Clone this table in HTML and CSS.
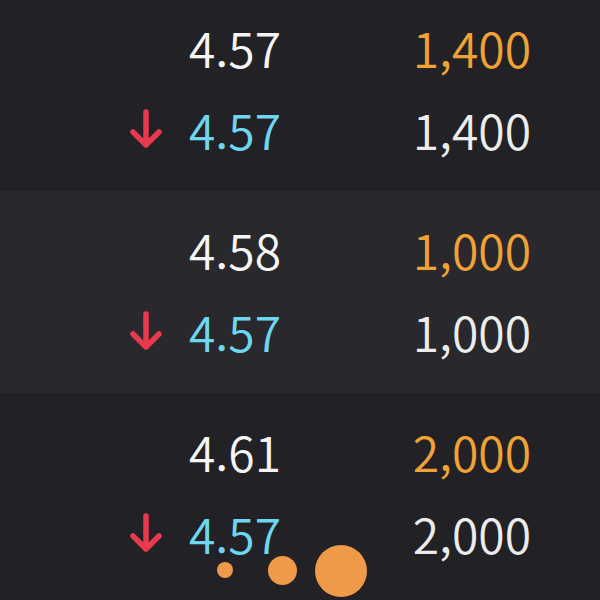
FILE: index.html
```html
<!DOCTYPE html>
<html lang="ko">
<head>
<meta charset="utf-8">
<title>Order book</title>
<link rel="stylesheet" href="styles.css">
</head>
<body>
<div class="book">
  <section class="block dark first">
    <div class="row">
      <span class="mark"></span>
      <span class="price">4.57</span>
      <span class="qty ask">1,400</span>
    </div>
    <div class="row">
      <span class="mark"><svg viewBox="0 0 36 40" width="36" height="40"><path d="M18 3 V36 M5 23 L18 36 L31 23" fill="none" stroke="#e8394f" stroke-width="5.5" stroke-linecap="round" stroke-linejoin="round"/></svg></span>
      <span class="price cur">4.57</span>
      <span class="qty">1,400</span>
    </div>
  </section>
  <section class="block light">
    <div class="row">
      <span class="mark"></span>
      <span class="price">4.58</span>
      <span class="qty ask">1,000</span>
    </div>
    <div class="row">
      <span class="mark"><svg viewBox="0 0 36 40" width="36" height="40"><path d="M18 3 V36 M5 23 L18 36 L31 23" fill="none" stroke="#e8394f" stroke-width="5.5" stroke-linecap="round" stroke-linejoin="round"/></svg></span>
      <span class="price cur">4.57</span>
      <span class="qty">1,000</span>
    </div>
  </section>
  <section class="block dark">
    <div class="row">
      <span class="mark"></span>
      <span class="price">4.61</span>
      <span class="qty ask">2,000</span>
    </div>
    <div class="row">
      <span class="mark"><svg viewBox="0 0 36 40" width="36" height="40"><path d="M18 3 V36 M5 23 L18 36 L31 23" fill="none" stroke="#e8394f" stroke-width="5.5" stroke-linecap="round" stroke-linejoin="round"/></svg></span>
      <span class="price cur">4.57</span>
      <span class="qty">2,000</span>
    </div>
  </section>
</div>
<div class="loader">
  <span class="dot s"></span>
  <span class="dot m"></span>
  <span class="dot l"></span>
</div>
</body>
</html>
```
FILE: styles.css
```css
html, body {
  margin: 0;
  padding: 0;
  background: #222226;
}
body {
  width: 600px;
  height: 600px;
  overflow: hidden;
  position: relative;
  font-family: "Noto Sans CJK KR", "Noto Sans", sans-serif;
}
.book {
  display: flex;
  flex-direction: column;
}
.block {
  height: 202px;
  box-sizing: border-box;
  padding: 17px 0 21px 128px;
}
.block.first {
  margin-top: -11px;
}
.dark { background: #222226; }
.light { background: #28282d; }
.row {
  display: grid;
  grid-template-columns: 36px 117px 250px;
  height: 82px;
  align-items: center;
}
.mark {
  display: flex;
  align-items: center;
  justify-content: center;
  height: 40px;
}
.mark svg { display: block; }
.price, .qty {
  font-size: 48px;
  line-height: 82px;
  text-align: right;
  color: #f5f5f5;
  font-weight: 350;
}
.price.cur { color: #6ed6ef; }
.qty { color: #ececec; }
.qty.ask { color: #f0a236; }
.loader {
  position: absolute;
  left: 0;
  top: 0;
  width: 600px;
  height: 600px;
  pointer-events: none;
}
.dot {
  position: absolute;
  border-radius: 50%;
  background: #ef9a48;
}
.dot.s { left: 217px; top: 562px; width: 16px; height: 16px; }
.dot.m { left: 268px; top: 556px; width: 29px; height: 29px; }
.dot.l { left: 315px; top: 545px; width: 52px; height: 52px; }
```
